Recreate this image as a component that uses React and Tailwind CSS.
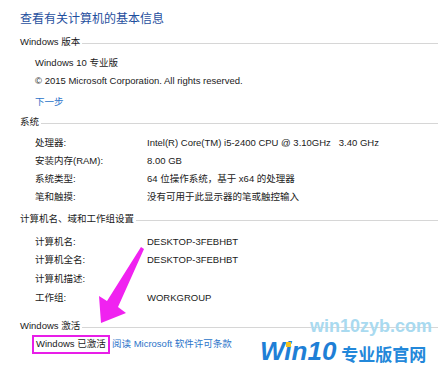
import React from 'react';

const font = { fontFamily: '"Liberation Sans", "Noto Sans CJK SC", sans-serif' };

function Header({ title, mt }) {
    return (
        <div className={`flex items-center h-[18px] pl-[20px] ${mt}`}>
            <span className="text-[9.5px] text-[#1a1a1a] whitespace-nowrap">{title}</span>
            <div className="flex-1 h-px bg-[#d6d6d6] ml-[2px] mt-[3px]" />
        </div>
    );
}

function Row({ label, value, mt = '' }) {
    return (
        <div className={`flex h-[18px] items-center pl-[35px] text-[9.5px] text-[#1a1a1a] whitespace-nowrap ${mt}`}>
            <span className={value === null ? '' : 'w-[112px] shrink-0'}>{label}</span>
            {value !== null && <span className="whitespace-pre">{value}</span>}
        </div>
    );
}

export default function App() {
    return (
        <div className="relative w-[438px] h-[367px] bg-white overflow-hidden" style={font}>
            <div className="h-[20px] mt-[8px] pl-[20px] text-[12px] leading-[20px] text-[#1f4f9e]"
                style={{ fontFamily: '"Noto Sans CJK SC", sans-serif' }}>
                查看有关计算机的基本信息
            </div>

            <Header title="Windows 版本" mt="mt-[5px]" />
            <Row label="Windows 10 专业版" value={null} mt="mt-[3px]" />
            <Row label="© 2015 Microsoft Corporation. All rights reserved." value={null} />
            <div className="h-[18px] mt-[3px] pl-[35px] flex items-center text-[9.5px] text-[#2a73c9]">下一步</div>

            <Header title="系统" mt="mt-[2px]" />
            <Row label="处理器:" value="Intel(R) Core(TM) i5-2400 CPU @ 3.10GHz   3.40 GHz" mt="mt-[3px]" />
            <Row label="安装内存(RAM):" value="8.00 GB" />
            <Row label="系统类型:" value="64 位操作系统，基于 x64 的处理器" />
            <Row label="笔和触摸:" value="没有可用于此显示器的笔或触控输入" />

            <Header title="计算机名、域和工作组设置" mt="mt-[4px]" />
            <Row label="计算机名:" value="DESKTOP-3FEBHBT" mt="mt-[5px]" />
            <Row label="计算机全名:" value="DESKTOP-3FEBHBT" />
            <Row label="计算机描述:" value="" mt="mt-[1px]" />
            <Row label="工作组:" value="WORKGROUP" mt="mt-[1px]" />

            <Header title="Windows 激活" mt="mt-[10px]" />
            <div className="flex items-center pl-[32px] text-[9.5px] whitespace-nowrap">
                <span className="h-[19px] w-[78px] border-2 border-[#e81ee8] flex items-center pl-[2px] text-[#1a1a1a]">
                    Windows 已激活
                </span>
                <span className="ml-[2px] text-[#2a73c9]">阅读 Microsoft 软件许可条款</span>
            </div>

            {/* pink arrow annotation */}
            <svg className="absolute left-0 top-0 pointer-events-none" width="438" height="367">
                <polygon
                    points="101,323 99,296 107,301 141,247 144,249 118,307 126,313"
                    fill="#f022f0"
                />
            </svg>

            {/* watermark */}
            <div className="absolute left-[310px] top-[316px] text-[18px] font-bold text-[#a9daf0] leading-[20px]"
                style={{ fontFamily: '"Liberation Sans", Arial, sans-serif' }}>
                win10zyb.com
            </div>
            <div className="absolute left-[260px] top-[338px] flex items-end leading-none">
                <span className="relative text-[26px] font-bold italic text-[#1f7fd6]"
                    style={{ fontFamily: '"Liberation Sans", Arial, sans-serif' }}>
                    Win10
                    <span className="absolute left-[26px] top-[4px] w-[5px] h-[5px] bg-[#f6c21a]" />
                </span>
                <span className="ml-[5px] mb-[2px] text-[17px] font-bold text-[#2388da]"
                    style={{ fontFamily: '"Noto Sans CJK SC", sans-serif' }}>
                    专业版官网
                </span>
            </div>
        </div>
    );
}
